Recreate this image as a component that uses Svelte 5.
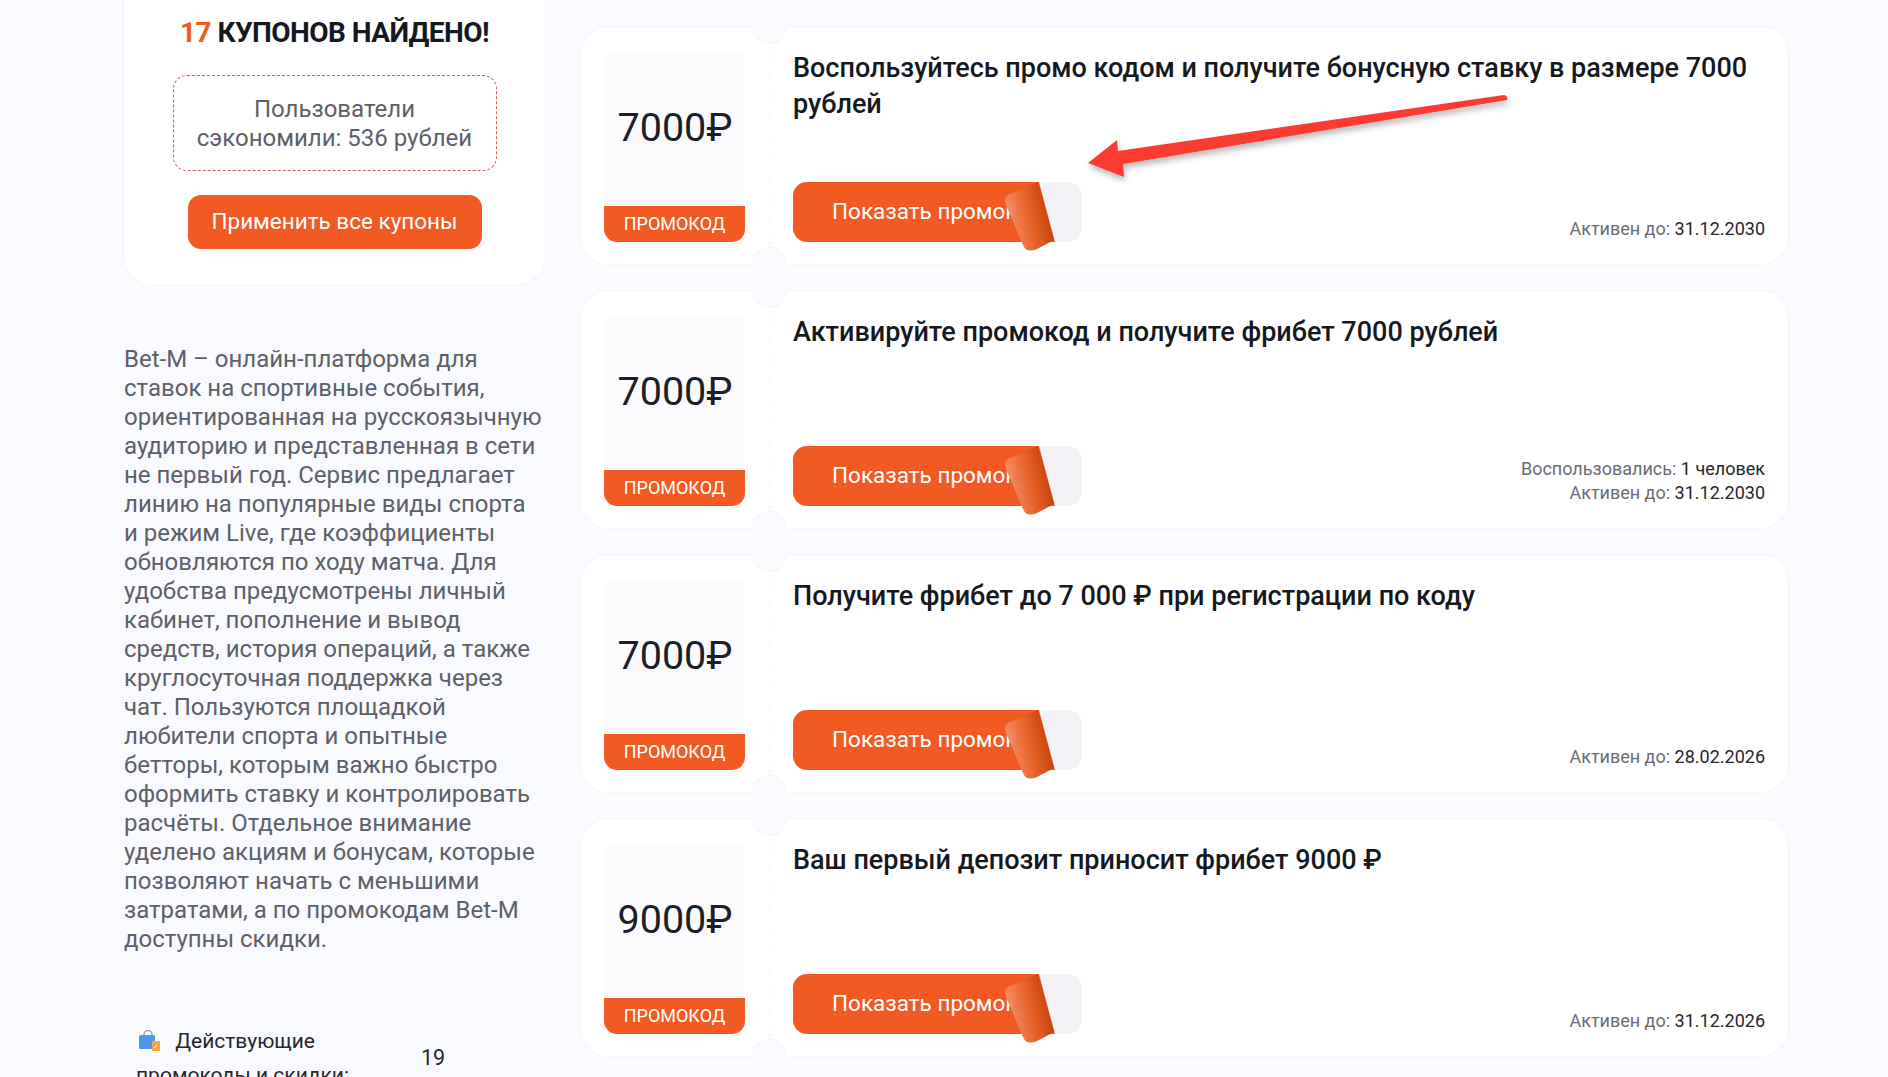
<script>
  const coupons = [
    { value: '7000₽', title: 'Воспользуйтесь промо кодом и получите бонусную ставку в размере 7000 рублей', until: '31.12.2030', used: null, arrow: true },
    { value: '7000₽', title: 'Активируйте промокод и получите фрибет 7000 рублей', until: '31.12.2030', used: '1 человек' },
    { value: '7000₽', title: 'Получите фрибет до 7 000 ₽ при регистрации по коду', until: '28.02.2026', used: null },
    { value: '9000₽', title: 'Ваш первый депозит приносит фрибет 9000 ₽', until: '31.12.2026', used: null }
  ];
</script>

<div class="page">
  <aside class="side">
    <section class="summary">
      <h2><span class="num">17</span> КУПОНОВ НАЙДЕНО!</h2>
      <div class="saved">Пользователи<br />сэкономили: 536 рублей</div>
      <button class="apply"><span>Применить все купоны</span></button>
    </section>
    <p class="about">Bet-M – онлайн-платформа для ставок на спортивные события, ориентированная на русскоязычную аудиторию и представленная в сети не первый год. Сервис предлагает линию на популярные виды спорта и режим Live, где коэффициенты обновляются по ходу матча. Для удобства предусмотрены личный кабинет, пополнение и вывод средств, история операций, а также круглосуточная поддержка через чат. Пользуются площадкой любители спорта и опытные бетторы, которым важно быстро оформить ставку и контролировать расчёты. Отдельное внимание уделено акциям и бонусам, которые позволяют начать с меньшими затратами, а по промокодам Bet-M доступны скидки.</p>
    <div class="stat">
      <div class="stat-label">
        <svg class="bag" viewBox="0 0 22 22" width="22" height="22" aria-hidden="true">
          <path d="M6 6V4.5a4 4 0 0 1 8 0V6" fill="none" stroke="#8fa6bb" stroke-width="1.4" />
          <rect x="1" y="5" width="16" height="14" rx="1.5" fill="#4f97e8" />
          <path d="M14 11h8v10h-8z" fill="#f6a64a" />
          <path d="M16 18l3-3" stroke="#fff" stroke-width="1" />
        </svg>
        <span class="first">Действующие</span> промокоды и скидки:
      </div>
      <div class="stat-num">19</div>
    </div>
  </aside>

  <main class="list">
    {#each coupons as c}
      <article class="coupon">
        <div class="left">
          <div class="value">{c.value}</div>
          <div class="tag">ПРОМОКОД</div>
        </div>
        <div class="perf">
          <span class="notch top"></span>
          <span class="notch bottom"></span>
        </div>
        <div class="body">
          <h3>{c.title}</h3>
          <div class="foot">
            <button class="show">
              <span class="face"><span class="label">Показать промокод</span></span>
              <svg class="peel" viewBox="0 0 70 80" width="70" height="80" aria-hidden="true">
                <defs>
                  <linearGradient id="peelg" x1="0.12" y1="0.58" x2="0.85" y2="0.36">
                    <stop offset="0" stop-color="#f58a63" />
                    <stop offset="0.55" stop-color="#e55f26" />
                    <stop offset="1" stop-color="#c8440f" />
                  </linearGradient>
                </defs>
                <path d="M40 2 L56 60 L38 69.5 Q28 73 25 65 L8 25 Q5 17 12 14 Z" fill="url(#peelg)" />
              </svg>
            </button>
            <div class="meta">
              {#if c.used}
                <div>Воспользовались: <b>{c.used}</b></div>
              {/if}
              <div>Активен до: <b>{c.until}</b></div>
            </div>
          </div>
        </div>
        {#if c.arrow}
          <svg class="arrow" viewBox="0 0 440 100" width="440" height="100" aria-hidden="true">
            <defs>
              <filter id="arrowshadow" x="-10%" y="-30%" width="120%" height="170%">
                <feDropShadow dx="1" dy="4" stdDeviation="3" flood-color="#000" flood-opacity="0.28" />
              </filter>
            </defs>
            <path d="M6 81 L35 58 L36 69 L422 13 Q426 14 425 18 L41 82 L42 95 Z" fill="#f93a32" filter="url(#arrowshadow)" />
          </svg>
        {/if}
      </article>
    {/each}
  </main>
</div>

<style>
  :global(body) {
    margin: 0;
    background: #f9fafd;
    font-family: Roboto, "Noto Sans", sans-serif;
  }
  .page {
    height: 1077px;
    overflow: hidden;
    display: grid;
    grid-template-columns: 423px 1209px;
    column-gap: 34px;
    padding-left: 123px;
    box-sizing: border-box;
  }
  .summary {
    height: 285px;
    box-sizing: border-box;
    background: #fff;
    border: 1px solid #f3f4f8;
    border-top: 0;
    border-radius: 0 0 28px 28px;
    padding-top: 15px;
    display: flex;
    flex-direction: column;
    align-items: center;
  }
  h2 {
    margin: 0;
    font-size: 28px;
    line-height: 36px;
    font-weight: 700;
    letter-spacing: -0.55px;
    color: #15191e;
  }
  .num { color: #f15a22; }
  .saved {
    margin-top: 24px;
    width: 324px;
    height: 96px;
    box-sizing: border-box;
    border: 1px dashed #c9605a;
    border-radius: 14px;
    padding-top: 19px;
    text-align: center;
    font-size: 24px;
    line-height: 29px;
    color: #5d6068;
  }
  .apply {
    margin-top: 24px;
    width: 294px;
    height: 54px;
    border: 0;
    border-radius: 13px;
    background: #f15a22;
    color: #fff;
    font: 400 22.5px Roboto, sans-serif;
    padding: 0 0 2px;
  }
  .about {
    margin: 60px 0 0 1px;
    width: 419px;
    font-size: 24px;
    line-height: 29px;
    color: #5d6068;
  }
  .stat {
    margin-top: 70px;
    display: flex;
    align-items: center;
    padding-left: 13px;
    font-size: 21px;
    line-height: 34px;
    color: #24272c;
  }
  .stat-label { width: 285px; }
  .bag { vertical-align: -4px; margin: 0 10px 0 2px; }
  .stat-num { font-size: 21.5px; }
  .list {
    padding-top: 26px;
    display: flex;
    flex-direction: column;
    gap: 25px;
  }
  .coupon {
    position: relative;
    height: 239px;
    flex: none;
    box-sizing: border-box;
    background: #fff;
    border: 1px solid #f3f4f8;
    border-radius: 28px;
    display: flex;
  }
  .left {
    width: 141px;
    margin: 23px 0 22px 23px;
    display: flex;
    flex-direction: column;
    flex: none;
  }
  .value {
    flex: 1;
    background: #fbfbfd;
    border-radius: 8px 8px 0 0;
    display: flex;
    align-items: center;
    justify-content: center;
    font-size: 39.5px;
    padding: 0 0 1px 1px;
    color: #1c2025;
  }
  .tag {
    height: 36px;
    background: #f15a22;
    border-radius: 0 0 13px 13px;
    color: #fff;
    font-size: 18px;
    line-height: 36px;
    text-align: center;
  }
  .perf {
    position: relative;
    flex: none;
    width: 0;
    margin-left: 24px;
    border-left: 1px dashed #f4f5f9;
  }
  .notch {
    position: absolute;
    left: -19px;
    width: 36px;
    height: 18px;
    box-sizing: border-box;
    background: #f9fafd;
    border: 1px solid #f3f4f8;
  }
  .notch.top {
    top: -1px;
    border-top: 0;
    border-radius: 0 0 18px 18px;
  }
  .notch.bottom {
    bottom: -1px;
    border-bottom: 0;
    border-radius: 18px 18px 0 0;
  }
  .body {
    flex: 1;
    min-width: 0;
    margin-left: 23px;
    padding: 23px 23px 22px 0;
    display: flex;
    flex-direction: column;
    justify-content: space-between;
  }
  h3 {
    margin: 0;
    font-size: 27px;
    line-height: 36px;
    font-weight: 500;
    color: #15191e;
  }
  .foot {
    display: flex;
    justify-content: space-between;
    align-items: flex-end;
  }
  .show {
    position: relative;
    width: 289px;
    height: 60px;
    padding: 0;
    border: 0;
    border-radius: 14px;
    background: #f1f1f6;
    font: 400 22.5px Roboto, sans-serif;
    color: #fff;
  }
  .face {
    position: absolute;
    inset: 0;
    background: #f15a22;
    border-radius: 14px;
    clip-path: polygon(0 0, 246px 0, 262px 100%, 0 100%);
    display: flex;
    align-items: center;
    padding: 0 0 2px 39px;
    white-space: nowrap;
  }
  .peel {
    position: absolute;
    left: 205px;
    top: -2px;
  }
  .meta {
    text-align: right;
    font-size: 18px;
    line-height: 24px;
    color: #6a6c72;
    margin-bottom: 1px;
  }
  .meta b {
    font-weight: 400;
    color: #24272c;
  }
  .arrow {
    position: absolute;
    left: 501px;
    top: 55px;
    pointer-events: none;
  }
</style>
